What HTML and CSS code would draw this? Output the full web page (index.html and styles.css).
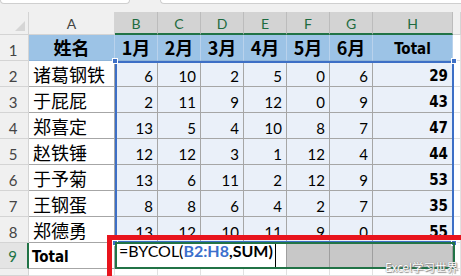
FILE: index.html
```html
<!DOCTYPE html>
<html lang="zh">
<head>
<meta charset="utf-8">
<title>BYCOL</title>
<link rel="stylesheet" href="styles.css">
</head>
<body>
<div class="app">
  <div class="topbar">
    <div class="namebox"></div>
    <div class="gap"></div>
    <div class="fbar"></div>
  </div>
  <div class="sheet">
    <!-- column headers -->
    <div class="ch corner"><svg width="12" height="12" viewBox="0 0 12 12"><polygon points="11,1 11,11 1,11" fill="#d6d6d6"/></svg></div>
    <div class="ch">A</div>
    <div class="ch on">B</div>
    <div class="ch on">C</div>
    <div class="ch on">D</div>
    <div class="ch on">E</div>
    <div class="ch on">F</div>
    <div class="ch on">G</div>
    <div class="ch on">H</div>
    <div class="ch"></div>

    <!-- row 1 -->
    <div class="rh">1</div>
    <div class="c hd cjk">姓名</div>
    <div class="c hd cjk">1月</div>
    <div class="c hd cjk">2月</div>
    <div class="c hd cjk">3月</div>
    <div class="c hd cjk">4月</div>
    <div class="c hd cjk">5月</div>
    <div class="c hd cjk">6月</div>
    <div class="c hd tt">Total</div>
    <div class="c out"></div>

    <!-- row 2 -->
    <div class="rh">2</div>
    <div class="c nm">诸葛钢铁</div>
    <div class="c s n">6</div><div class="c s n">10</div><div class="c s n">2</div><div class="c s n">5</div><div class="c s n">0</div><div class="c s n">6</div>
    <div class="c s b">29</div>
    <div class="c out"></div>

    <!-- row 3 -->
    <div class="rh">3</div>
    <div class="c nm">于屁屁</div>
    <div class="c s n">2</div><div class="c s n">11</div><div class="c s n">9</div><div class="c s n">12</div><div class="c s n">0</div><div class="c s n">9</div>
    <div class="c s b">43</div>
    <div class="c out"></div>

    <!-- row 4 -->
    <div class="rh">4</div>
    <div class="c nm">郑喜定</div>
    <div class="c s n">13</div><div class="c s n">5</div><div class="c s n">4</div><div class="c s n">10</div><div class="c s n">8</div><div class="c s n">7</div>
    <div class="c s b">47</div>
    <div class="c out"></div>

    <!-- row 5 -->
    <div class="rh">5</div>
    <div class="c nm">赵铁锤</div>
    <div class="c s n">12</div><div class="c s n">12</div><div class="c s n">3</div><div class="c s n">1</div><div class="c s n">12</div><div class="c s n">4</div>
    <div class="c s b">44</div>
    <div class="c out"></div>

    <!-- row 6 -->
    <div class="rh">6</div>
    <div class="c nm">于予菊</div>
    <div class="c s n">13</div><div class="c s n">6</div><div class="c s n">11</div><div class="c s n">2</div><div class="c s n">12</div><div class="c s n">9</div>
    <div class="c s b">53</div>
    <div class="c out"></div>

    <!-- row 7 -->
    <div class="rh">7</div>
    <div class="c nm">王钢蛋</div>
    <div class="c s n">8</div><div class="c s n">8</div><div class="c s n">6</div><div class="c s n">4</div><div class="c s n">2</div><div class="c s n">7</div>
    <div class="c s b">35</div>
    <div class="c out"></div>

    <!-- row 8 -->
    <div class="rh">8</div>
    <div class="c nm">郑德勇</div>
    <div class="c s n">13</div><div class="c s n">12</div><div class="c s n">10</div><div class="c s n">11</div><div class="c s n">9</div><div class="c s n">0</div>
    <div class="c s b">55</div>
    <div class="c out"></div>

    <!-- row 9 -->
    <div class="rh act">9</div>
    <div class="c tt left">Total</div>
    <div class="c edit"><span class="f">=BYCOL(</span><span class="fb ref">B2:H8</span><span class="fb">,SUM)</span><span class="caret"></span></div>
    <div class="c gray"></div>
    <div class="c gray"></div>
    <div class="c gray"></div>
    <div class="c out"></div>

    <!-- row 10 -->
    <div class="rh"></div>
    <div class="c out"></div>
    <div class="c out"></div><div class="c out"></div><div class="c out"></div><div class="c out"></div><div class="c out"></div><div class="c out"></div>
    <div class="c out"></div>
    <div class="c out"></div>

    <!-- overlays -->
    <div class="refbox"></div>
    <div class="hdl h1"></div>
    <div class="hdl h2"></div>
    <div class="hdl h3"></div>
    <div class="hdl h4"></div>
    <div class="actbox"></div>
    <div class="fill"></div>
    <div class="redbox"></div>
    <div class="wm">Excel学习世界</div>
  </div>
</div>
</body>
</html>
```
FILE: styles.css
```css
* { box-sizing: border-box; }
html, body { margin: 0; padding: 0; }
body { width: 461px; height: 276px; overflow: hidden; background: #ffffff; }

.app { width: 461px; height: 276px; overflow: hidden; position: relative; }

.topbar {
  height: 12px;
  background: #f0f0f0;
  display: flex;
  align-items: flex-start;
}
.namebox {
  width: 130px;
  height: 4px;
  background: #ffffff;
  border: 1px solid #cfcfcf;
  border-top: none;
  border-radius: 0 0 5px 5px;
}
.gap { width: 30px; }
.fbar {
  flex: 1;
  height: 4px;
  background: #ffffff;
  border: 1px solid #cfcfcf;
  border-top: none;
  border-right: none;
  border-radius: 0 0 0 5px;
}

.sheet {
  position: relative;
  display: grid;
  grid-template-columns: 29px 86px repeat(6, 43px) 80px 8px;
  grid-template-rows: 23px repeat(9, 26px) 7px;
  font-family: "Lato", "Liberation Sans", sans-serif;
}

.ch {
  background: #f0f0f0;
  border-right: 1px solid #d4d4d4;
  border-bottom: 1px solid #d4d4d4;
  color: #444444;
  font-size: 14px;
  display: flex;
  justify-content: center;
  align-items: flex-end;
  padding-bottom: 3px;
  line-height: 1;
}
.ch.on {
  background: #d3d3d3;
  color: #1d6b40;
  border-bottom: 2px solid #217346;
  border-right-color: #bcbcbc;
  padding-bottom: 2px;
}
.ch.corner { justify-content: flex-end; align-items: flex-end; padding: 0 2px 2px 0; }
.ch.corner svg { display: block; }

.rh {
  background: #f0f0f0;
  border-right: 1px solid #d4d4d4;
  border-bottom: 1px solid #d4d4d4;
  color: #444444;
  font-size: 15px;
  display: flex;
  justify-content: center;
  align-items: flex-end;
  padding: 0 2px 2px 0;
  line-height: 1;
}
.rh.act {
  color: #217346;
  background: #e4e4e4;
  border-right: 2px solid #217346;
  padding-bottom: 4px;
}

.c {
  border-right: 1px solid #a6a6a6;
  border-bottom: 1px solid #a6a6a6;
  display: flex;
  align-items: flex-end;
  line-height: 1;
  white-space: nowrap;
  overflow: hidden;
  color: #000000;
}
.c.out { border-right-color: #e1e1e1; border-bottom-color: #e1e1e1; }

.cjk {
  font-family: "Noto Sans CJK SC", sans-serif;
  font-weight: 700;
  font-size: 18px;
  justify-content: center;
  padding-bottom: 4px;
}
.hd { background: #9cc3e6; border-right-color: #b9d2ec; border-bottom-color: #8fb4d8; }

.tt {
  font-family: "DejaVu Sans Condensed", "DejaVu Sans", sans-serif;
  font-stretch: condensed;
  font-weight: 700;
  font-size: 15px;
  justify-content: center;
  padding-bottom: 3px;
}
.tt.left { justify-content: flex-start; padding-left: 3px; padding-bottom: 3px; }

.nm {
  font-family: "Noto Sans CJK SC", sans-serif;
  font-size: 18px;
  padding: 0 0 3px 4px;
}

.s { background: #eaf0f9; }
.n {
  font-size: 15px;
  justify-content: flex-end;
  padding: 0 4px 2px 0;
}
.b {
  font-family: "DejaVu Sans Condensed", "DejaVu Sans", sans-serif;
  font-stretch: condensed;
  font-weight: 700;
  font-size: 15px;
  justify-content: flex-end;
  padding: 0 4px 2px 0;
}

.edit {
  grid-column: span 4;
  background: #ffffff;
  border-right-color: #9f9f9f;
  align-items: flex-start;
  padding: 0 0 0 4px;
  font-size: 16px;
  overflow: visible;
}
.f { line-height: 16px; }
.fb { font-weight: 700; line-height: 16px; }
.ref { color: #3b6fcc; }
.caret {
  width: 1px;
  height: 24px;
  background: #000000;
  margin-left: 2px;
}
.gray { background: #c8c8c8; border-right-color: #9f9f9f; }

/* overlays */
.refbox {
  position: absolute;
  left: 115px; top: 49px;
  width: 339px; height: 182px;
  border: 2px solid #3d6fc6;
}
.hdl {
  position: absolute;
  width: 6px; height: 6px;
  background: #3d6fc6;
  border: 1px solid #ffffff;
}
.h1 { left: 112px; top: 46px; }
.h2 { left: 451px; top: 46px; }
.h3 { left: 112px; top: 228px; }
.h4 { left: 451px; top: 228px; }
.actbox {
  position: absolute;
  left: 115px; top: 230px;
  width: 340px; height: 27px;
  border: 2px solid #217346;
}
.fill {
  position: absolute;
  left: 451px; top: 252px;
  width: 6px; height: 6px;
  background: #217346;
  border: 1px solid #ffffff;
}
.redbox {
  position: absolute;
  left: 107px; top: 223px;
  width: 360px; height: 60px;
  border: 5px solid #e8141d;
}
.wm {
  position: absolute;
  left: 385px; top: 248px;
  font-family: "Noto Sans CJK SC", sans-serif;
  font-size: 11.5px;
  line-height: 14px;
  color: #ffffff;
  text-shadow: 0 0 1px #6a6a6a, 1px 1px 1px #8a8a8a;
  white-space: nowrap;
}
```
